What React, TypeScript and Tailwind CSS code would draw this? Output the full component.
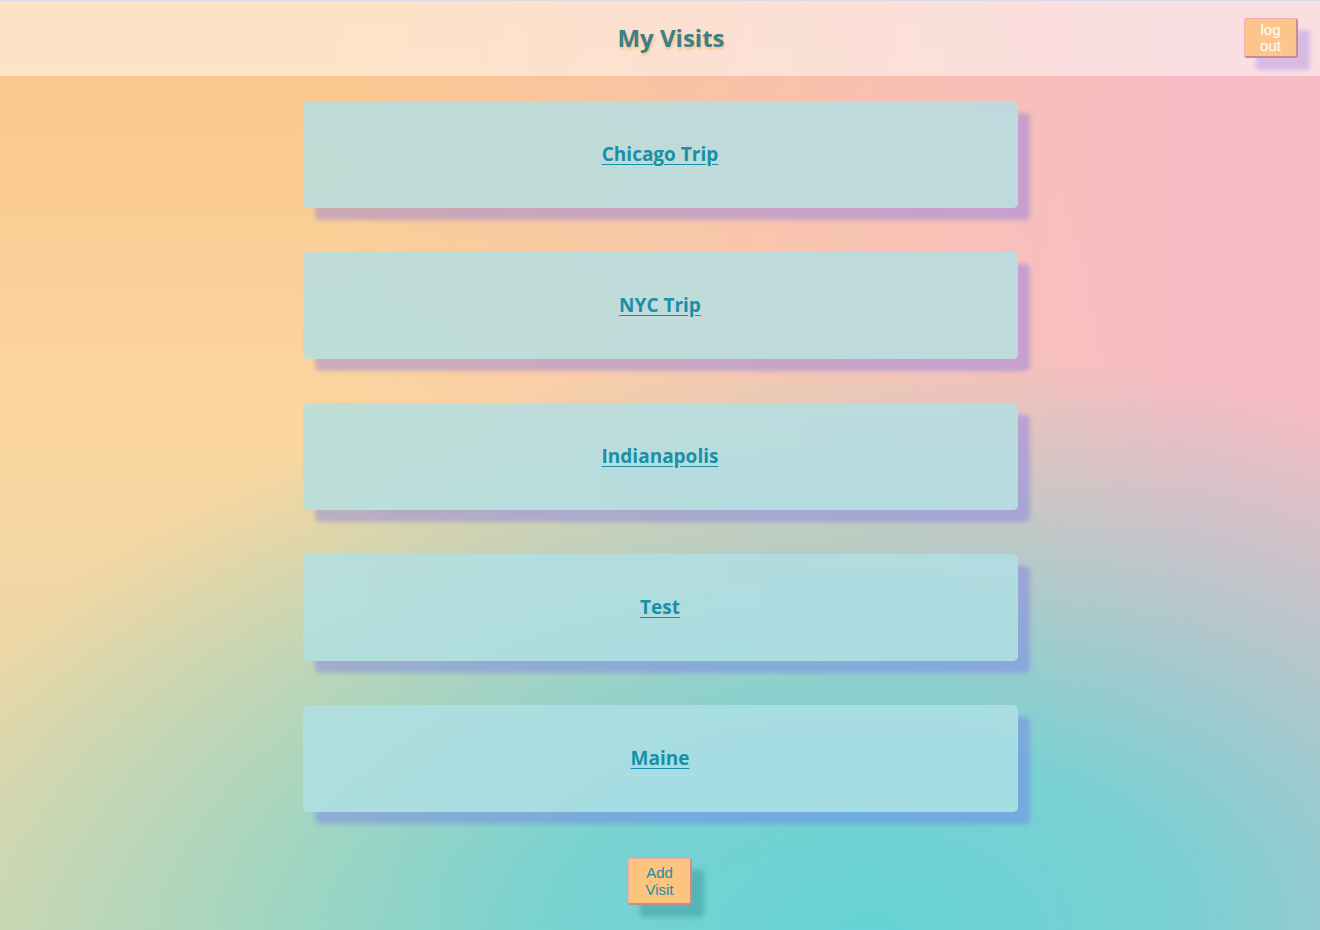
import React from 'react'

const visits = ['Chicago Trip', 'NYC Trip', 'Indianapolis', 'Test', 'Maine']

const Header: React.FC = () => (
  <div className="relative flex items-center justify-center h-[76px] bg-white/50 border-t border-[#d3dfe8]">
    <h1 className="pl-[22px] pb-[1px] text-[24px] font-bold text-[#3a7f8a] font-['Open_Sans',sans-serif] [text-shadow:1px_2px_3px_#f6bd80]">
      My Visits
    </h1>
    <button className="absolute right-[22px] top-[17px] w-[54px] h-[40px] rounded-[3px] bg-[#fbc58b] border border-[#f5aeb0] border-b-2 border-r-2 border-b-[#c98a8c] border-r-[#c98a8c] text-white text-[15px] leading-[16px] font-['Liberation_Sans',Arial,sans-serif] shadow-[12px_12px_4px_rgba(150,120,230,0.35)]">
      log
      <br />
      out
    </button>
  </div>
)

const VisitCard: React.FC<{ name: string }> = ({ name }) => (
  <div className="flex items-center justify-center w-[715px] h-[107px] rounded-[5px] bg-[#b0e0e6]/80 shadow-[12px_12px_4px_rgba(110,100,240,0.35)]">
    <a href="#" className="text-[19px] font-bold text-[#1a8fa8] underline underline-offset-[3px] font-['Open_Sans',sans-serif]">
      {name}
    </a>
  </div>
)

export default function App() {
  return (
    <div className="h-screen overflow-hidden bg-[radial-gradient(ellipse_1000px_580px_at_66%_100%,rgba(102,211,214,1)_0%,rgba(102,211,214,0.85)_32%,rgba(102,211,214,0)_100%),linear-gradient(to_right,rgba(246,188,196,0)_25%,rgba(246,188,196,1)_90%),linear-gradient(to_bottom,#f9c48a,#fcd69f_45%,#dcd8ad)]">
      <Header />
      <div className="flex flex-col items-center pt-[25px] gap-[44px]">
        {visits.map((v) => (
          <VisitCard key={v} name={v} />
        ))}
        <button className="mt-[2px] w-[64px] h-[47px] rounded-[3px] bg-[#fcc47e] border border-[#f5a8a8] border-b-2 border-r-2 border-b-[#d08888] border-r-[#d08888] text-[#1a8fa8] text-[15px] leading-[17px] font-['Liberation_Sans',Arial,sans-serif] shadow-[12px_12px_5px_rgba(0,90,100,0.25)]">
          Add
          <br />
          Visit
        </button>
      </div>
    </div>
  )
}
